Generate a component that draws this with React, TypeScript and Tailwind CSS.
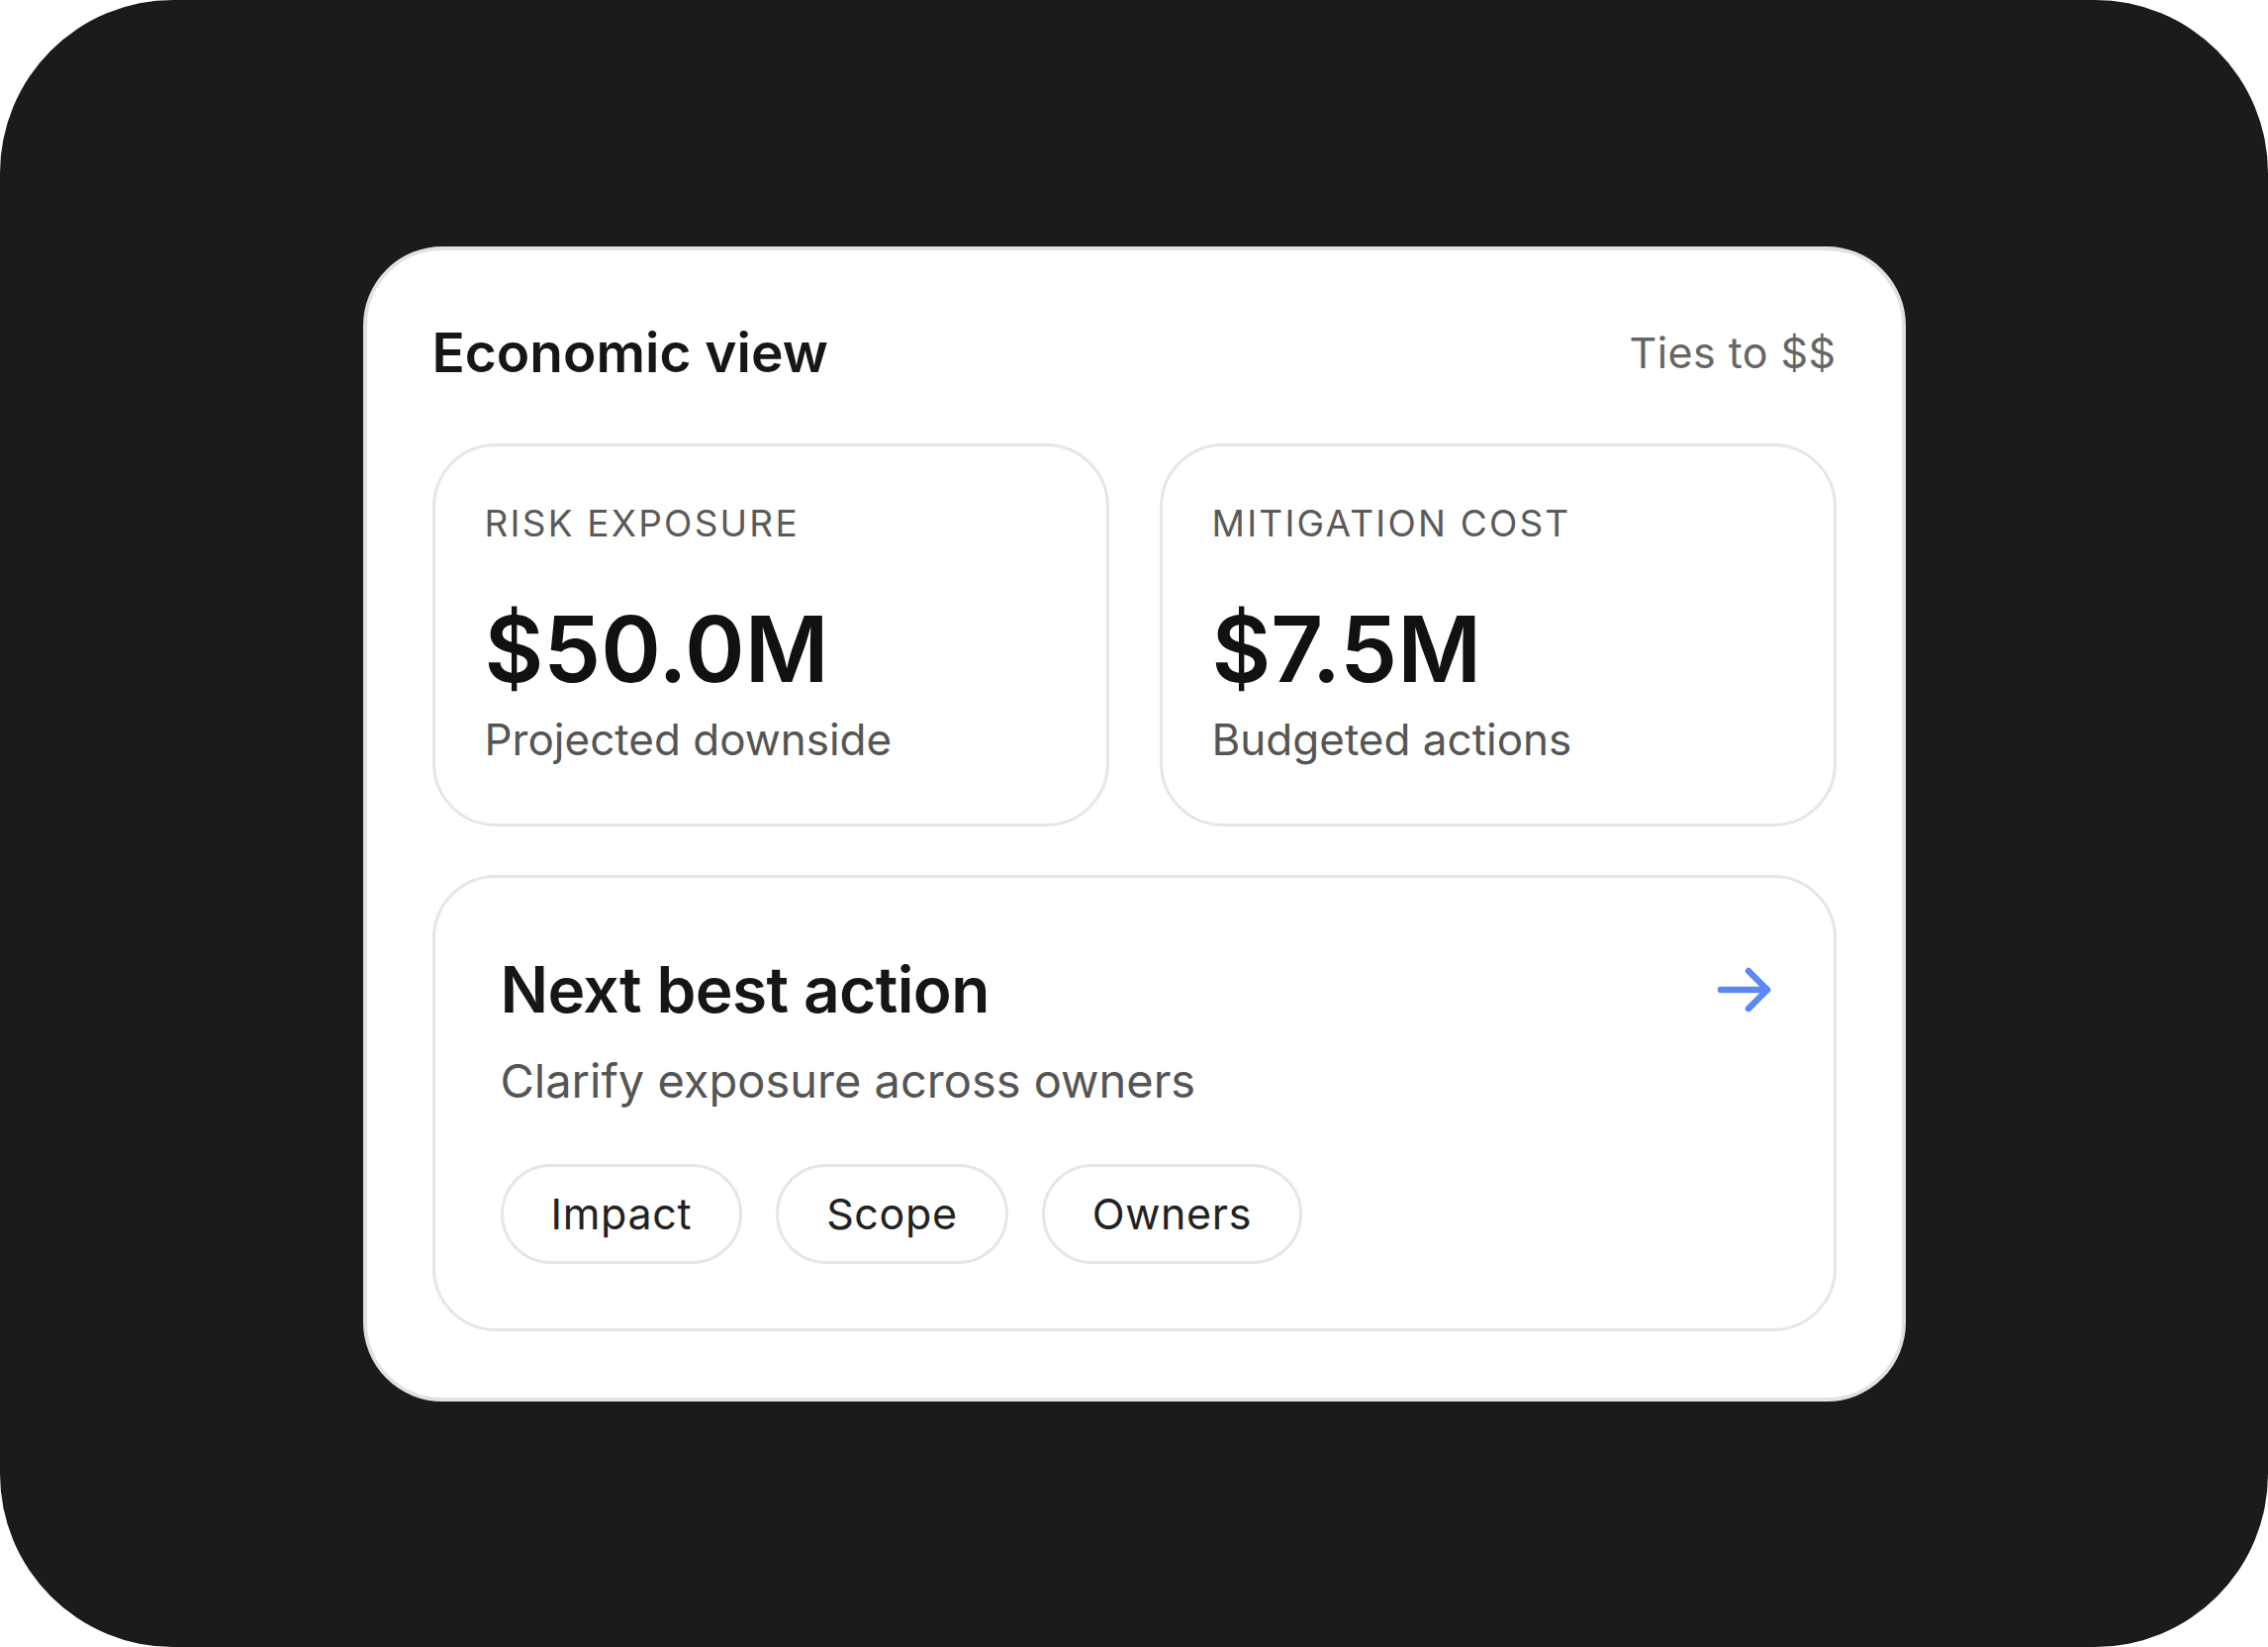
import React from "react";

function Chip({ label }: { label: string }) {
  return (
    <div className="flex h-[101px] items-center rounded-full border-[3px] border-[#e6e6e6] px-[48px] text-[43px] tracking-[0.015em] text-[#222222]">
      {label}
    </div>
  );
}

function Metric({ label, value, sub }: { label: string; value: string; sub: string }) {
  return (
    <div className="flex flex-col rounded-[64px] border-[3px] border-[#e6e6e6] pt-[55px] pb-[56px] px-[50px]">
      <div className="text-[37px] leading-[45px] tracking-[0.06em] text-[#5a5a5a]">{label}</div>
      <div className="mt-[54px] text-[92px] leading-[101px] font-semibold text-[#111111]">{value}</div>
      <div className="mt-[12px] text-[44px] leading-[58px] text-[#555555]">{sub}</div>
    </div>
  );
}

export default function App() {
  return (
    <div className="h-screen w-full bg-white" style={{ fontFamily: "Inter, 'Noto Sans', sans-serif" }}>
      <div className="flex h-full w-full items-center justify-center rounded-[175px] bg-[#1b1b1b]">
        <div className="w-[1559px] rounded-[80px] border-[4px] border-[#e2e2e2] bg-white px-[66px] pt-[71px] pb-[67px]">
          <div className="flex h-[66px] items-center justify-between">
            <div className="text-[55px] font-semibold text-[#161616]">Economic view</div>
            <div className="text-[43px] tracking-[0.01em] text-[#666666]">Ties to $$</div>
          </div>
          <div className="mt-[58px] grid grid-cols-2 gap-[51px]">
            <Metric label="RISK EXPOSURE" value="$50.0M" sub="Projected downside" />
            <Metric label="MITIGATION COST" value="$7.5M" sub="Budgeted actions" />
          </div>
          <div className="mt-[49px] rounded-[64px] border-[3px] border-[#e6e6e6] px-[66px] pt-[76px] pb-[65px]">
            <div className="flex h-[74px] items-center justify-between">
              <div className="text-[64px] font-semibold tracking-[-0.01em] text-[#161616]">Next best action</div>
              <svg width="56" height="48" viewBox="0 0 56 48" fill="none" className="mr-[-4px]">
                <path
                  d="M4 24H51M32 5L51 24L32 43"
                  stroke="#5b88f5"
                  strokeWidth="6.5"
                  strokeLinecap="round"
                  strokeLinejoin="round"
                />
              </svg>
            </div>
            <div className="mt-[26px] text-[47px] leading-[58px] text-[#555555]">
              Clarify exposure across owners
            </div>
            <div className="mt-[55px] flex gap-[34px]">
              <Chip label="Impact" />
              <Chip label="Scope" />
              <Chip label="Owners" />
            </div>
          </div>
        </div>
      </div>
    </div>
  );
}
